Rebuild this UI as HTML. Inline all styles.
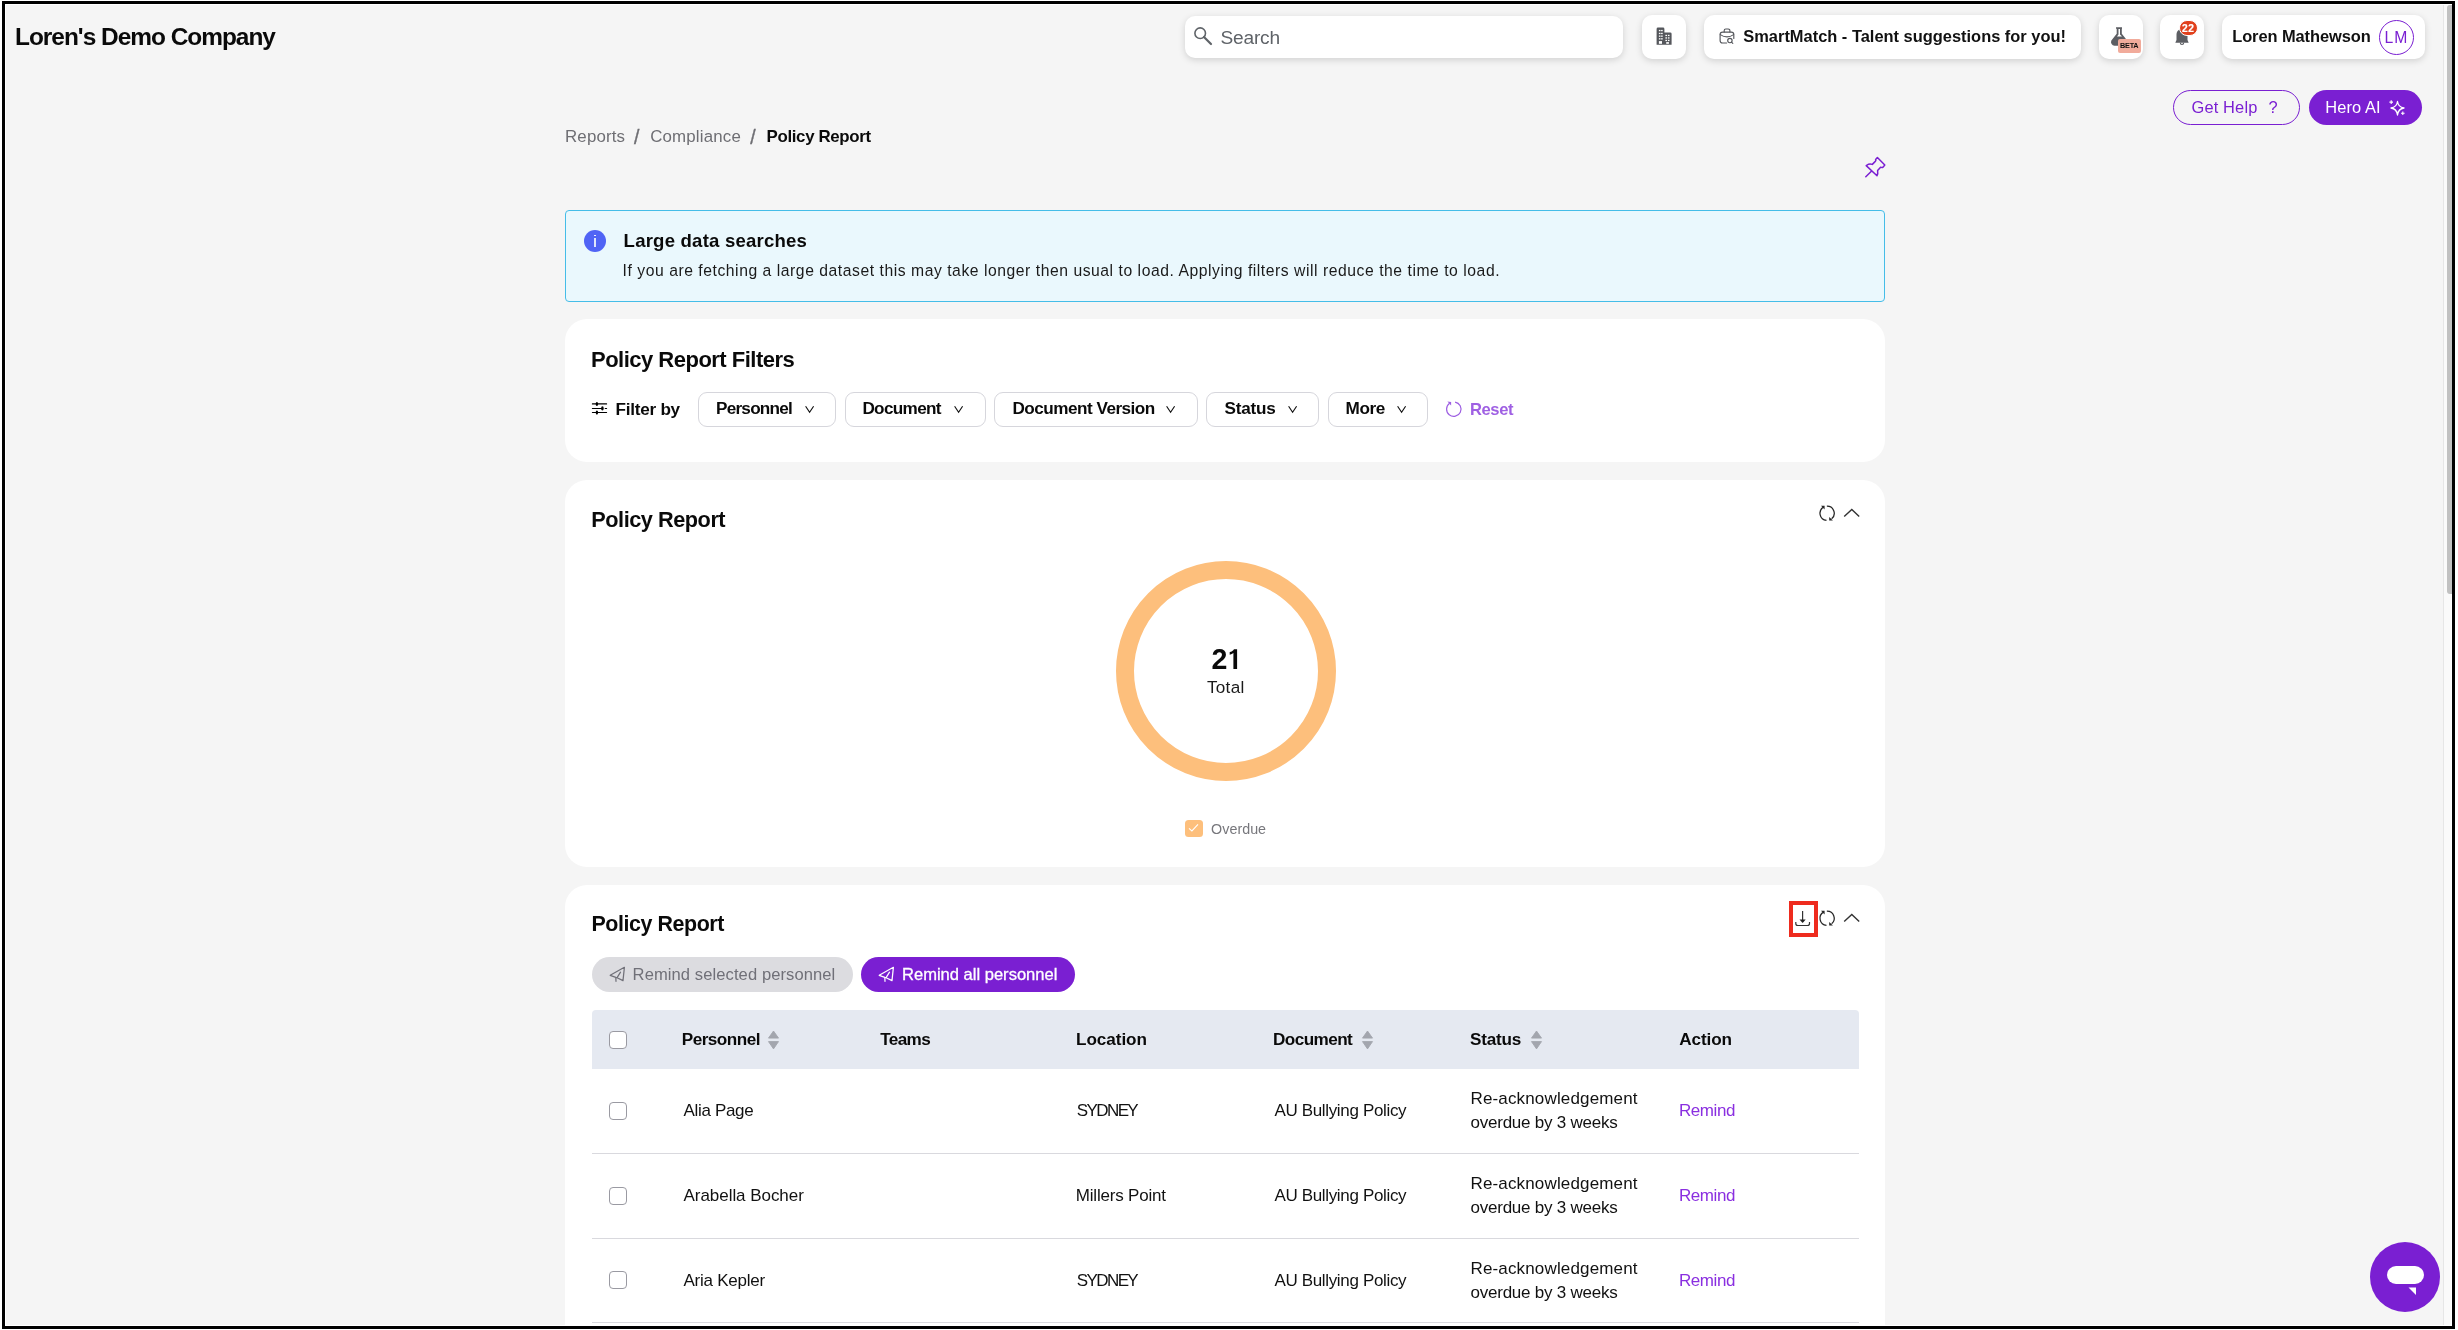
<!DOCTYPE html>
<html><head><meta charset="utf-8"><style>
html,body{margin:0;padding:0;width:2458px;height:1330px;overflow:hidden;background:#fff;font-family:"Liberation Sans",sans-serif}
.a{position:absolute;box-sizing:border-box}
.t{position:absolute;white-space:nowrap;line-height:1;font-family:"Liberation Sans",sans-serif}
.card{position:absolute;background:#fff;border-radius:22px}
.tb{position:absolute;background:#fff;border-radius:10px;box-shadow:0 2px 7px rgba(0,0,0,0.15)}
.fbtn{position:absolute;background:#fff;border:1.5px solid #d6d6dc;border-radius:9px;box-sizing:border-box}
.cb{position:absolute;width:18px;height:18px;box-sizing:border-box;border:1.5px solid #9a9aa2;border-radius:4px;background:#fff}
.rl{position:absolute;left:592px;width:1267px;height:1.5px;background:#d9d9de}
svg{position:absolute;overflow:visible}
</style></head><body>
<!-- page bg + frame -->
<div class="a" style="left:5px;top:4px;width:2447px;height:1322px;background:#fff"></div>
<div class="a" style="left:6px;top:5px;width:2445px;height:1320px;background:#f5f5f5"></div>
<!-- scrollbar -->
<div class="a" style="left:2443px;top:5px;width:8px;height:1320px;background:#fafafa;border-left:1px solid #e6e6e6"></div>
<div class="a" style="left:2447px;top:5px;width:5px;height:589px;background:#c1c1c1;border-radius:3px 0 0 3px"></div>

<!-- top bar buttons -->
<div class="tb" style="left:1185px;top:16px;width:438px;height:42px"></div>
<svg style="left:1194px;top:27px" width="18" height="18" viewBox="0 0 18 18"><circle cx="6.2" cy="6.2" r="5.3" fill="none" stroke="#5f6368" stroke-width="1.6"/><path d="M10 10 L17 17" stroke="#5f6368" stroke-width="2.2" stroke-linecap="round"/></svg>
<div class="tb" style="left:1642px;top:15px;width:44px;height:44px"></div>
<svg style="left:1656px;top:27px" width="17" height="19" viewBox="0 0 17 19"><path d="M0.6 17.8 V1.9 a1.4 1.4 0 0 1 1.4-1.4 H7 a1.4 1.4 0 0 1 1.4 1.4 V5.4 H14.2 a1.4 1.4 0 0 1 1.4 1.4 V17.8 Z" fill="#55575c"/><g fill="#fff"><rect x="2.9" y="2.9" width="1.6" height="1.3"/><rect x="2.9" y="5.8" width="1.6" height="1.3"/><rect x="2.9" y="8.5" width="1.6" height="1.3"/><rect x="2.9" y="11.2" width="1.6" height="1.3"/><rect x="5.1" y="2.9" width="1.6" height="1.3"/><rect x="5.1" y="5.8" width="1.6" height="1.3"/><rect x="5.1" y="8.5" width="1.6" height="1.3"/><rect x="5.1" y="11.2" width="1.6" height="1.3"/><rect x="2.9" y="14.1" width="3.1" height="2.7"/><rect x="9.4" y="7.8" width="1.6" height="1.3"/><rect x="9.4" y="10.3" width="1.6" height="1.3"/><rect x="9.4" y="12.8" width="1.6" height="1.3"/><rect x="11.9" y="7.8" width="1.6" height="1.3"/><rect x="11.9" y="10.3" width="1.6" height="1.3"/><rect x="11.9" y="12.8" width="1.6" height="1.3"/><rect x="10.2" y="15.1" width="2.7" height="1.7"/></g></svg>
<div class="tb" style="left:1704px;top:15px;width:377px;height:44px"></div>
<svg style="left:1719px;top:27px" width="17" height="18" viewBox="0 0 17 18"><g fill="none" stroke="#55575c" stroke-width="1.15" stroke-linecap="round"><path d="M5.2 5 V3.6 a1.6 1.6 0 0 1 1.6-1.6 h2.5 a1.6 1.6 0 0 1 1.6 1.6 V5"/><path d="M7.6 16 H3.6 a2.5 2.5 0 0 1 -2.5 -2.5 V7.6 a2.5 2.5 0 0 1 2.5 -2.5 H12.3 a2.5 2.5 0 0 1 2.5 2.5 V11.5"/><path d="M1.3 7.6 Q8 12.3 14.6 7.6"/><circle cx="10.9" cy="13.5" r="2.2"/><path d="M12.5 15.1 L13.8 16.4"/></g></svg>
<div class="tb" style="left:2099px;top:15px;width:44px;height:44px"></div>
<svg style="left:2110px;top:27px" width="32" height="27" viewBox="0 0 32 27"><path d="M6 1 h6 M7.5 1 V7 L2 14 a3 3 0 0 0 2.5 4 H14 a3 3 0 0 0 2.5 -4 L11 7 V1" fill="#5c5e63" stroke="#5c5e63" stroke-width="1.6" stroke-linejoin="round"/><path d="M8.5 2 V7.5 L7 9.5 h5 L10 7.5 V2 Z" fill="#fff"/></svg>
<div class="a" style="left:2118px;top:39px;width:23px;height:14px;background:#f1ab9b;border-radius:2px"></div>
<span class="t" style="left:2120.2px;top:42.3px;font-size:7.3px;font-weight:700;color:#111;letter-spacing:-0.25px;will-change:transform">BETA</span>
<div class="tb" style="left:2160px;top:15px;width:44px;height:44px"></div>
<svg style="left:2174px;top:27px" width="16" height="19" viewBox="0 0 16 19"><path d="M8 2 C4.5 2 2.5 4.5 2.5 8 V13 L1.3 15.8 H14.7 L13.5 13 V8 C13.5 4.5 11.5 2 8 2Z" fill="#5c5e63"/><path d="M6.3 15.8 a1.7 1.7 0 0 0 3.4 0" fill="none" stroke="#5c5e63" stroke-width="1.1"/></svg>
<div class="a" style="left:2178.9px;top:20px;width:19.2px;height:16.4px;background:#e1401c;border-radius:9px;border:0.8px solid #fff"></div>
<span class="t" style="left:2182.2px;top:23.5px;font-size:10.2px;font-weight:700;color:#fff;letter-spacing:0.6px;will-change:transform;-webkit-text-stroke:0.2px #fff">22</span>
<div class="tb" style="left:2222px;top:15px;width:203px;height:44px"></div>
<div class="a" style="left:2379px;top:20px;width:35px;height:35px;border:1.5px solid #7a1fd2;border-radius:50%"></div>

<!-- help buttons -->
<div class="a" style="left:2173px;top:90px;width:127px;height:35px;border:1.5px solid #7a1fd2;border-radius:18px"></div>
<div class="a" style="left:2309px;top:90px;width:113px;height:35px;background:#7a1fd2;border-radius:18px"></div>
<svg style="left:2388px;top:100px" width="18" height="17" viewBox="0 0 18 17"><path d="M9.5 1.5 Q10.2 7.2 16 8 Q10.2 8.8 9.5 15 Q8.8 8.8 3 8 Q8.8 7.2 9.5 1.5Z" fill="none" stroke="#fff" stroke-width="1.3" stroke-linejoin="round"/><path d="M3.2 0.3 v3.6 M1.4 2.1 h3.6" stroke="#fff" stroke-width="1.1"/><path d="M14.8 11.4 v3.6 M13 13.2 h3.6" stroke="#fff" stroke-width="1.1"/></svg>

<!-- pin -->
<svg style="left:1864px;top:156px" width="22" height="22" viewBox="0 0 22 22"><g fill="none" stroke="#7a1fd2" stroke-width="1.5" stroke-linejoin="round" stroke-linecap="round"><path d="M1.8 20.7 L7.4 15.2"/><path d="M2.2 9.6 L13 19.7 C13.6 18.6 13.9 16.3 13.6 14.6 L16.6 11.2 C17.3 11.6 18.4 11.6 19 11.2 L20.8 9.1 L13.4 1.5 L11.6 3.4 C11.9 4 11.8 5 11.3 5.4 L8.3 8.4 C7.2 8 5.7 7.9 4.6 8.2 Z"/></g></svg>

<!-- info banner -->
<div class="a" style="left:565px;top:210px;width:1320px;height:92px;background:#eaf8fd;border:1.5px solid #45bde8;border-radius:4px"></div>
<div class="a" style="left:584px;top:230px;width:22px;height:22px;background:#5064f5;border-radius:50%"></div>
<div class="a" style="left:594.1px;top:234.6px;width:2px;height:1.8px;background:#eef1fd"></div>
<div class="a" style="left:594.1px;top:238.2px;width:2px;height:9.1px;background:#dfe6fb"></div>

<!-- filter card -->
<div class="card" style="left:565px;top:319px;width:1320px;height:143px"></div>
<svg style="left:592px;top:401px" width="16" height="14" viewBox="0 0 16 14"><g stroke="#000" stroke-width="1.1" stroke-linecap="round"><path d="M0.4 2.9 H14.6 M0.4 7.5 H10.4 M13.2 7.5 H14.6 M0.4 11.5 H14.6"/></g><g fill="#000"><ellipse cx="4.9" cy="2.9" rx="1.2" ry="2"/><ellipse cx="10.4" cy="7.4" rx="1.3" ry="2.1"/><ellipse cx="4.9" cy="11.6" rx="1.2" ry="2.1"/></g></svg>
<div class="fbtn" style="left:698px;top:392px;width:138px;height:35px"></div>
<div class="fbtn" style="left:845px;top:392px;width:141px;height:35px"></div>
<div class="fbtn" style="left:994px;top:392px;width:204px;height:35px"></div>
<div class="fbtn" style="left:1206px;top:392px;width:113px;height:35px"></div>
<div class="fbtn" style="left:1328px;top:392px;width:100px;height:35px"></div>
<svg style="left:805.2px;top:405px" width="10" height="9" viewBox="0 0 10 9"><path d="M0.6 1.3 L4.6 7.2 L8.6 1.3" fill="none" stroke="#111" stroke-width="1.15"/></svg>
<svg style="left:953.8px;top:405px" width="10" height="9" viewBox="0 0 10 9"><path d="M0.6 1.3 L4.6 7.2 L8.6 1.3" fill="none" stroke="#111" stroke-width="1.15"/></svg>
<svg style="left:1166.4px;top:405px" width="10" height="9" viewBox="0 0 10 9"><path d="M0.6 1.3 L4.6 7.2 L8.6 1.3" fill="none" stroke="#111" stroke-width="1.15"/></svg>
<svg style="left:1287.7px;top:405px" width="10" height="9" viewBox="0 0 10 9"><path d="M0.6 1.3 L4.6 7.2 L8.6 1.3" fill="none" stroke="#111" stroke-width="1.15"/></svg>
<svg style="left:1397px;top:405px" width="10" height="9" viewBox="0 0 10 9"><path d="M0.6 1.3 L4.6 7.2 L8.6 1.3" fill="none" stroke="#111" stroke-width="1.15"/></svg>
<svg style="left:1445px;top:401px" width="17" height="17" viewBox="0 0 17 17"><path d="M10.1 1.06 A7.2 7.2 0 1 1 4.6 2.3" fill="none" stroke="#9d5ee2" stroke-width="1.2"/><path d="M2.4 0.5 L6.1 0.9 L6.1 4.4 Z" fill="#9d5ee2"/></svg>

<!-- chart card -->
<div class="card" style="left:565px;top:480px;width:1320px;height:387px"></div>
<svg style="left:1817px;top:504px" width="20" height="19" viewBox="0 0 20 19"><g fill="none" stroke="#262626" stroke-width="1.25"><path d="M6.55 3.15 A7.1 7.1 0 0 0 9.48 16.37"/><path d="M9.85 2.2 A7.1 7.1 0 0 1 14.66 14.74"/></g><path d="M4 1.8 H7.6 V5.4 Z M12.2 13.1 V16.5 H15.9 Z" fill="#262626"/></svg>
<svg style="left:1842.5px;top:508px" width="18" height="10" viewBox="0 0 18 10"><path d="M1.2 8.6 L8.8 1.5 L16.2 8.6" fill="none" stroke="#333" stroke-width="1.4"/></svg>
<svg style="left:1114px;top:559px" width="224" height="224" viewBox="0 0 224 224"><circle cx="112" cy="112" r="101" fill="none" stroke="#fdbf7c" stroke-width="18"/></svg>
<div class="a" style="left:1184.8px;top:820px;width:18.2px;height:16.9px;background:#fdbf7c;border-radius:3.5px"></div>
<svg style="left:1187px;top:823px" width="14" height="12" viewBox="0 0 14 12"><path d="M2 5.3 L4.9 7.9 L11 1.4" fill="none" stroke="#fff" stroke-width="1.05"/></svg>

<svg style="left:0;top:0" width="1" height="1"></svg>
<svg style="left:1228px;top:648px" width="11" height="22" viewBox="1228 648 11 22"><path d="M1233.4 668.9 H1237.1 V649.2 H1234 C1233.2 650.6 1231.8 651.6 1229.7 652 V654.7 C1231.2 654.4 1232.5 653.8 1233.4 652.9 Z" fill="#0a0a0a"/></svg>
<!-- table card -->
<div class="card" style="left:565px;top:885px;width:1320px;height:445px;border-radius:22px 22px 0 0"></div>
<div class="a" style="left:1789px;top:901px;width:29px;height:36px;border:4px solid #ee2b1e"></div>
<svg style="left:1794px;top:910px" width="18" height="18" viewBox="0 0 18 18"><path d="M8.6 1 V12" stroke="#333" stroke-width="1.2"/><path d="M5.5 9.5 L8.6 13 L11.7 9.5 Z" fill="#222"/><path d="M1.8 12 V13.5 a2 2 0 0 0 2 2 H13.5 a2 2 0 0 0 2 -2 V12" fill="none" stroke="#333" stroke-width="1.2"/></svg>
<svg style="left:1817px;top:909px" width="20" height="19" viewBox="0 0 20 19"><g fill="none" stroke="#262626" stroke-width="1.25"><path d="M6.55 3.15 A7.1 7.1 0 0 0 9.48 16.37"/><path d="M9.85 2.2 A7.1 7.1 0 0 1 14.66 14.74"/></g><path d="M4 1.8 H7.6 V5.4 Z M12.2 13.1 V16.5 H15.9 Z" fill="#262626"/></svg>
<svg style="left:1842.5px;top:913px" width="18" height="10" viewBox="0 0 18 10"><path d="M1.2 8.6 L8.8 1.5 L16.2 8.6" fill="none" stroke="#333" stroke-width="1.4"/></svg>

<div class="a" style="left:592px;top:957px;width:261px;height:35px;background:#dcdce0;border-radius:18px"></div>
<svg style="left:608.6px;top:966px" width="17" height="17" viewBox="0 0 17 17"><path d="M6.8 11.3 L1.2 9.3 L15.4 1.3 L14 14.6 L8.1 11.7 Z M6.8 11.3 L7 15.3 M8.1 11.7 L11.5 6.2" fill="none" stroke="#707078" stroke-width="1.25" stroke-linejoin="round" stroke-linecap="round"/></svg>
<div class="a" style="left:861px;top:957px;width:214px;height:35px;background:#7a1fd2;border-radius:18px"></div>
<svg style="left:878px;top:966px" width="17" height="17" viewBox="0 0 17 17"><path d="M6.8 11.3 L1.2 9.3 L15.4 1.3 L14 14.6 L8.1 11.7 Z M6.8 11.3 L7 15.3 M8.1 11.7 L11.5 6.2" fill="none" stroke="#fff" stroke-width="1.25" stroke-linejoin="round" stroke-linecap="round"/></svg>

<div class="a" style="left:592px;top:1010px;width:1267px;height:58.5px;background:#e5e9f1;border-radius:4px 4px 0 0"></div>
<div class="cb" style="left:609px;top:1031px"></div>
<svg style="left:767px;top:1030px" width="13" height="20" viewBox="0 0 13 20"><path d="M6.5 1 L11.5 8.1 H1.5 Z M1.5 11.6 H11.5 L6.5 18.9 Z" fill="#a3a6ae" stroke="#a3a6ae" stroke-width="0.9" stroke-linejoin="round"/></svg>
<svg style="left:1361px;top:1030px" width="13" height="20" viewBox="0 0 13 20"><path d="M6.5 1 L11.5 8.1 H1.5 Z M1.5 11.6 H11.5 L6.5 18.9 Z" fill="#a3a6ae" stroke="#a3a6ae" stroke-width="0.9" stroke-linejoin="round"/></svg>
<svg style="left:1530px;top:1030px" width="13" height="20" viewBox="0 0 13 20"><path d="M6.5 1 L11.5 8.1 H1.5 Z M1.5 11.6 H11.5 L6.5 18.9 Z" fill="#a3a6ae" stroke="#a3a6ae" stroke-width="0.9" stroke-linejoin="round"/></svg>
<div class="cb" style="left:609px;top:1102px"></div>
<div class="cb" style="left:609px;top:1187px"></div>
<div class="cb" style="left:609px;top:1271px"></div>
<div class="rl" style="top:1152.7px"></div>
<div class="rl" style="top:1237.5px"></div>
<div class="rl" style="top:1321.5px"></div>

<!-- chat bubble -->
<div class="a" style="left:2370px;top:1242px;width:70px;height:70px;background:#7a1fd2;border-radius:50%"></div>
<div class="a" style="left:2386.5px;top:1265.8px;width:37px;height:18.5px;background:#fff;border-radius:9.25px"></div>
<svg style="left:2408px;top:1287px" width="9" height="9" viewBox="0 0 9 9"><path d="M0.5 0.5 H8 V8 Z" fill="#fff"/></svg>


<div style="position:absolute;left:0;top:0;width:2458px;height:1330px;will-change:transform">
<span id="company" class="t" style="left:15.0px;top:24.8px;font-size:24.43px;font-weight:700;color:#0a0a0a;letter-spacing:-1.000px;">Loren's Demo Company</span>
<span id="search" class="t" style="left:1220.5px;top:27.6px;font-size:19.14px;font-weight:400;color:#5f6368;letter-spacing:-0.200px;">Search</span>
<span id="smart" class="t" style="left:1743.3px;top:28.0px;font-size:16.43px;font-weight:700;color:#111;letter-spacing:0.000px;">SmartMatch - Talent suggestions for you!</span>
<span id="user" class="t" style="left:2232.2px;top:27.8px;font-size:16.43px;font-weight:700;color:#111;letter-spacing:-0.071px;">Loren Mathewson</span>
<span id="lm" class="t" style="left:2384.5px;top:29.7px;font-size:15.71px;font-weight:400;color:#7a1fd2;letter-spacing:1.000px;">LM</span>
<span id="gethelp" class="t" style="left:2191.5px;top:98.7px;font-size:16.43px;font-weight:400;color:#7a1fd2;letter-spacing:0.143px;">Get Help</span>
<span id="q" class="t" style="left:2268.5px;top:98.7px;font-size:16.43px;font-weight:400;color:#7a1fd2;letter-spacing:0.000px;">?</span>
<span id="heroai" class="t" style="left:2325.3px;top:98.7px;font-size:16.43px;font-weight:400;color:#fff;letter-spacing:0.100px;">Hero AI</span>
<span id="bc1" class="t" style="left:565.0px;top:128.7px;font-size:16.86px;font-weight:400;color:#6e6e73;letter-spacing:0.167px;">Reports</span>
<span id="bcs1" class="t" style="left:634.0px;top:127.7px;font-size:19.43px;font-weight:400;color:#6e6e73;letter-spacing:0.000px;-webkit-text-stroke:0.35px #6e6e73;">/</span>
<span id="bc2" class="t" style="left:650.2px;top:128.7px;font-size:16.86px;font-weight:400;color:#6e6e73;letter-spacing:0.178px;">Compliance</span>
<span id="bcs2" class="t" style="left:750.2px;top:127.7px;font-size:19.43px;font-weight:400;color:#6e6e73;letter-spacing:0.000px;-webkit-text-stroke:0.35px #6e6e73;">/</span>
<span id="bc3" class="t" style="left:766.6px;top:128.7px;font-size:16.86px;font-weight:700;color:#0a0a0a;letter-spacing:-0.350px;">Policy Report</span>
<span id="bantitle" class="t" style="left:623.6px;top:231.7px;font-size:18.57px;font-weight:700;color:#0a0a0a;letter-spacing:0.211px;">Large data searches</span>
<span id="banbody" class="t" style="left:622.6px;top:262.6px;font-size:15.71px;font-weight:400;color:#1a1a1a;letter-spacing:0.541px;">If you are fetching a large dataset this may take longer then usual to load. Applying filters will reduce the time to load.</span>
<span id="ftitle" class="t" style="left:591.0px;top:348.9px;font-size:22.00px;font-weight:700;color:#0a0a0a;letter-spacing:-0.510px;">Policy Report Filters</span>
<span id="filterby" class="t" style="left:615.5px;top:401.4px;font-size:17.14px;font-weight:700;color:#0a0a0a;letter-spacing:-0.250px;">Filter by</span>
<span id="fb1" class="t" style="left:716.0px;top:400.0px;font-size:17.14px;font-weight:700;color:#0a0a0a;letter-spacing:-0.750px;">Personnel</span>
<span id="fb2" class="t" style="left:862.4px;top:400.0px;font-size:17.14px;font-weight:700;color:#0a0a0a;letter-spacing:-0.657px;">Document</span>
<span id="fb3" class="t" style="left:1012.5px;top:400.0px;font-size:17.14px;font-weight:700;color:#0a0a0a;letter-spacing:-0.507px;">Document Version</span>
<span id="fb4" class="t" style="left:1224.6px;top:400.0px;font-size:17.14px;font-weight:700;color:#0a0a0a;letter-spacing:-0.240px;">Status</span>
<span id="fb5" class="t" style="left:1345.6px;top:400.0px;font-size:17.14px;font-weight:700;color:#0a0a0a;letter-spacing:-0.400px;">More</span>
<span id="reset" class="t" style="left:1469.9px;top:401.8px;font-size:16.57px;font-weight:700;color:#9f60e3;letter-spacing:-0.350px;">Reset</span>
<span id="ctitle" class="t" style="left:591.3px;top:508.5px;font-size:21.71px;font-weight:700;color:#0a0a0a;letter-spacing:-0.467px;">Policy Report</span>
<span id="n21" class="t" style="left:1211.6px;top:644.6px;font-size:28.57px;font-weight:700;color:#0a0a0a;letter-spacing:0.000px;">2</span>
<span id="total" class="t" style="left:1206.9px;top:679.3px;font-size:17.14px;font-weight:400;color:#1a1a1a;letter-spacing:0.300px;">Total</span>
<span id="overdue" class="t" style="left:1211.1px;top:821.9px;font-size:14.29px;font-weight:400;color:#77777c;letter-spacing:0.033px;">Overdue</span>
<span id="ttitle" class="t" style="left:591.5px;top:914.3px;font-size:21.43px;font-weight:700;color:#0a0a0a;letter-spacing:-0.433px;">Policy Report</span>
<span id="rsel" class="t" style="left:632.6px;top:967.1px;font-size:16.57px;font-weight:400;color:#707078;letter-spacing:0.083px;">Remind selected personnel</span>
<span id="rall" class="t" style="left:902.0px;top:967.1px;font-size:16.57px;font-weight:400;color:#fff;letter-spacing:-0.011px;-webkit-text-stroke:0.3px #fff;">Remind all personnel</span>
<span id="h1" class="t" style="left:681.8px;top:1031.4px;font-size:17.14px;font-weight:700;color:#0a0a0a;letter-spacing:-0.525px;">Personnel</span>
<span id="h2" class="t" style="left:880.2px;top:1031.4px;font-size:17.14px;font-weight:700;color:#0a0a0a;letter-spacing:-0.600px;">Teams</span>
<span id="h3" class="t" style="left:1076.0px;top:1031.4px;font-size:17.14px;font-weight:700;color:#0a0a0a;letter-spacing:-0.057px;">Location</span>
<span id="h4" class="t" style="left:1273.0px;top:1031.4px;font-size:17.14px;font-weight:700;color:#0a0a0a;letter-spacing:-0.571px;">Document</span>
<span id="h5" class="t" style="left:1470.0px;top:1031.4px;font-size:17.14px;font-weight:700;color:#0a0a0a;letter-spacing:-0.200px;">Status</span>
<span id="h6" class="t" style="left:1679.2px;top:1031.4px;font-size:17.14px;font-weight:700;color:#0a0a0a;letter-spacing:-0.080px;">Action</span>
<span id="r0n" class="t" style="left:683.5px;top:1102.0px;font-size:17.00px;font-weight:400;color:#111;letter-spacing:-0.325px;">Alia Page</span>
<span id="r0l" class="t" style="left:1076.8px;top:1102.0px;font-size:17.00px;font-weight:400;color:#111;letter-spacing:-1.600px;">SYDNEY</span>
<span id="r0d" class="t" style="left:1274.4px;top:1102.0px;font-size:17.00px;font-weight:400;color:#111;letter-spacing:-0.341px;">AU Bullying Policy</span>
<span id="r0s1" class="t" style="left:1470.5px;top:1090.0px;font-size:17.00px;font-weight:400;color:#111;letter-spacing:0.153px;">Re-acknowledgement</span>
<span id="r0s2" class="t" style="left:1470.5px;top:1114.0px;font-size:17.00px;font-weight:400;color:#111;letter-spacing:-0.235px;">overdue by 3 weeks</span>
<span id="r0a" class="t" style="left:1679.0px;top:1102.0px;font-size:17.00px;font-weight:400;color:#8a2fe0;letter-spacing:-0.440px;">Remind</span>
<span id="r1n" class="t" style="left:683.5px;top:1186.8px;font-size:17.00px;font-weight:400;color:#111;letter-spacing:-0.043px;">Arabella Bocher</span>
<span id="r1l" class="t" style="left:1075.8px;top:1186.8px;font-size:17.00px;font-weight:400;color:#111;letter-spacing:-0.200px;">Millers Point</span>
<span id="r1d" class="t" style="left:1274.4px;top:1186.8px;font-size:17.00px;font-weight:400;color:#111;letter-spacing:-0.341px;">AU Bullying Policy</span>
<span id="r1s1" class="t" style="left:1470.5px;top:1174.7px;font-size:17.00px;font-weight:400;color:#111;letter-spacing:0.153px;">Re-acknowledgement</span>
<span id="r1s2" class="t" style="left:1470.5px;top:1198.8px;font-size:17.00px;font-weight:400;color:#111;letter-spacing:-0.235px;">overdue by 3 weeks</span>
<span id="r1a" class="t" style="left:1679.0px;top:1186.8px;font-size:17.00px;font-weight:400;color:#8a2fe0;letter-spacing:-0.440px;">Remind</span>
<span id="r2n" class="t" style="left:683.5px;top:1271.5px;font-size:17.00px;font-weight:400;color:#111;letter-spacing:-0.240px;">Aria Kepler</span>
<span id="r2l" class="t" style="left:1076.8px;top:1271.5px;font-size:17.00px;font-weight:400;color:#111;letter-spacing:-1.600px;">SYDNEY</span>
<span id="r2d" class="t" style="left:1274.4px;top:1271.5px;font-size:17.00px;font-weight:400;color:#111;letter-spacing:-0.341px;">AU Bullying Policy</span>
<span id="r2s1" class="t" style="left:1470.5px;top:1259.5px;font-size:17.00px;font-weight:400;color:#111;letter-spacing:0.153px;">Re-acknowledgement</span>
<span id="r2s2" class="t" style="left:1470.5px;top:1283.5px;font-size:17.00px;font-weight:400;color:#111;letter-spacing:-0.235px;">overdue by 3 weeks</span>
<span id="r2a" class="t" style="left:1679.0px;top:1271.5px;font-size:17.00px;font-weight:400;color:#8a2fe0;letter-spacing:-0.440px;">Remind</span>
</div>
<!-- frame on top -->
<div class="a" style="left:5px;top:1325px;width:2447px;height:1px;background:#fff"></div>
<div class="a" style="left:0;top:1329px;width:2458px;height:1px;background:#fff"></div>
<div class="a" style="left:2px;top:1px;width:2453px;height:1328px;border:3px solid #000"></div>

</body></html>
